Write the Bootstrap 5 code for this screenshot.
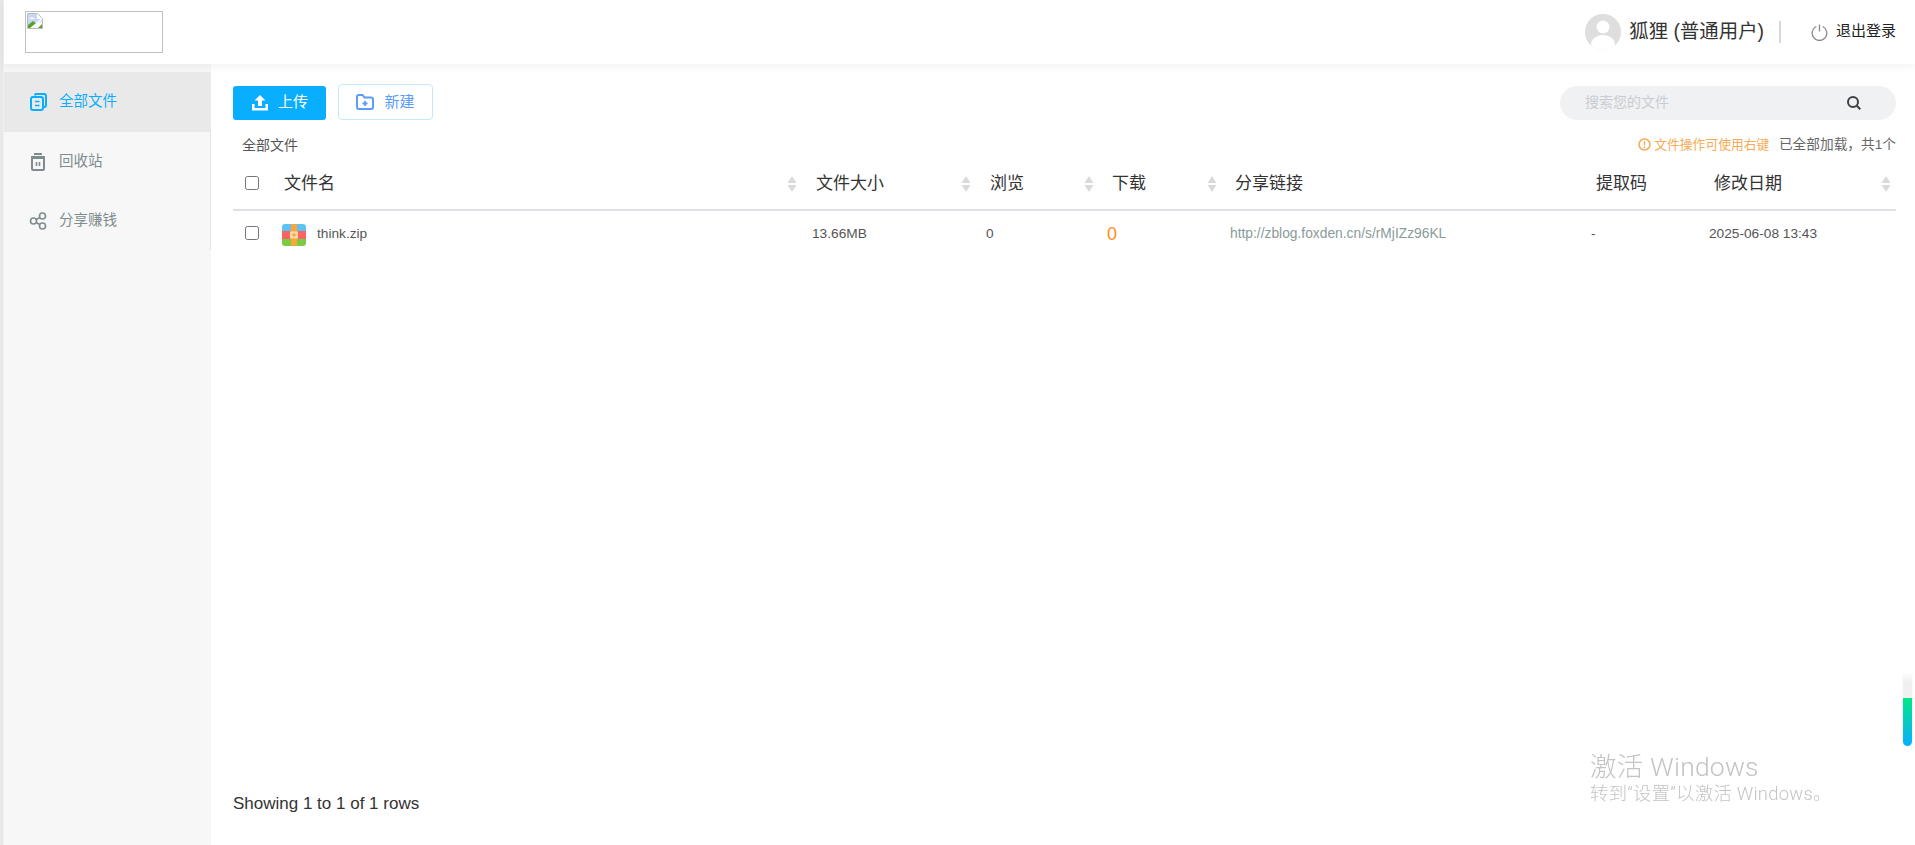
<!DOCTYPE html>
<html lang="zh-CN">
<head>
<meta charset="utf-8">
<title>全部文件</title>
<link rel="stylesheet" href="https://cdn.jsdelivr.net/npm/bootstrap@5.3.0/dist/css/bootstrap.min.css">
<style>
html,body{height:100%;overflow:hidden}
body{font-family:"Liberation Sans","Noto Sans CJK SC",sans-serif;background:#fff;color:#333;font-size:14px}
.edge-strip{width:4px;background:#e8e8e8;flex:none;border-right:1px solid #f1f1f1}
.top-head{height:64px;flex:none;padding:0 19px 0 21px;background:#fff;box-shadow:0 2px 9px rgba(0,0,0,.06);position:relative;z-index:2}
.logo-box{width:138px;height:42px;border:1px solid #c0c0c0;padding:1px;display:block}
.avatar-pic{width:36px;height:36px;display:block}
.user-name{font-size:19.4px;color:#333;margin-left:8px}
.head-sep{width:2px;height:22px;background:#d8d8d8;margin:0 30px 0 15px}
.logout-txt{font-size:15px;color:#222;margin-left:8px;margin-top:-2px}
.side-col{width:207px;flex:none;background:#f7f7f7;padding-top:8px}
.side-list{border-right:1px solid #e4e4e4}
.side-item{height:59px;padding-left:25px;color:#7f8c8d;font-size:14.5px}
.side-glyph{width:18px;height:18px;margin-right:12px;display:block;flex:none}
.side-item.on{height:60px;background:#e9e9e9;color:#0aaeff;margin-right:-1px}
.main-col{padding:21px 19px 0 22px;min-width:0;position:relative}
.btn-up,.btn-up:hover{width:93px;height:34px;background:#0aaeff;color:#fff;border:0;border-radius:3px;font-size:15px;padding:0;gap:9px}
.btn-new,.btn-new:hover{width:95px;height:36px;background:#fff;color:#5a9cf8;border:1px solid #c4e8ff;border-radius:4px;font-size:15px;padding:0;gap:10px;margin-left:12px;margin-top:-1px}
.find-box{width:336px;height:34px;background:#f0f1f3;border-radius:17px;padding:0 35px 0 25px}
.find-box input{border:0;background:transparent;outline:0;flex:1;font-size:14px;min-width:0;padding:0}
.find-box input::placeholder{color:#c8ccd2}
.crumb-row{margin-top:13px;height:24px;padding-left:9px;font-size:14px;color:#555}
.tip-warn{color:#f5ab56;font-size:12.8px;gap:3px;margin-right:9.500px}
.tip-load{color:#666;font-size:13.7px}
.file-table{table-layout:fixed;width:1663px;margin:1px 0 0}
.file-table>thead>tr>th{height:52px;padding:0 0 0 12px;font-size:17px;font-weight:400;color:#333;border-bottom:2px solid #dee2e6;vertical-align:middle;box-shadow:none;background-repeat:no-repeat;background-position:right 5px center;background-size:10px 16px}
.file-table>thead>tr>th:nth-child(n+5){padding-left:13px}
.file-table>thead>tr>th:nth-child(2),.file-table>thead>tr>th:nth-child(3){background-position:right 7px center}
.file-table>thead>tr>th.sortable{background-image:url("data:image/svg+xml,%3Csvg xmlns='http://www.w3.org/2000/svg' viewBox='0 0 10 16'%3E%3Cpath d='M5 0l4.500 7H.5zM5 16L.5 9h9z' fill='%23dadada'/%3E%3C/svg%3E")}
.file-table>thead>tr>th.name-th{padding-left:9px}
.file-table>tbody>tr>td{height:48px;padding:0 0 0 8px;font-size:13.7px;color:#555;border:0;vertical-align:middle;box-shadow:none}
.file-table input[type=checkbox]{width:14px;height:14px;margin:0;display:block;accent-color:#0aaeff}
.file-table>thead input[type=checkbox]{margin-top:-2px}
.file-table>tbody input[type=checkbox]{margin-top:-4px}
.file-table>thead>tr>th.tick-cell,.file-table>tbody>tr>td.tick-cell{padding-left:12px}
.file-name{gap:11px;margin-left:-1px;padding-left:0}
.file-table>tbody>tr>td.count-hot{font-size:18px;color:#ff8c1a}
.file-table>tbody>tr>td.share-link{color:#8b9a9a;font-size:13.8px}
.pager-note{position:absolute;left:22px;bottom:29px;font-size:17px;color:#333}
.win-mark{position:fixed;left:1590px;top:751px;color:#c4c4c4;font-family:Roboto,"Noto Sans CJK SC",sans-serif;z-index:5}
.win-mark .big{font-size:26.5px;line-height:32px;font-weight:300;letter-spacing:.2px}
.win-mark .sub{font-size:18.4px;line-height:22px;font-weight:300;letter-spacing:.25px}
.scroll-pill{position:fixed;left:1903px;top:675px;width:9px;height:71px;border-radius:0 0 5px 5px;background:linear-gradient(#fafafa 0,#efefef 12%,#f1f1f1 33%,#00e887 33%,#0aaeff 100%);box-shadow:0 0 3px rgba(0,0,0,.05);z-index:5}
</style>
</head>
<body class="d-flex">
<div class="edge-strip"></div>
<div class="flex-grow-1 d-flex flex-column" style="min-width:0">
  <header class="top-head d-flex align-items-center justify-content-between">
    <span class="logo-box"><svg width="16" height="16" viewBox="0 0 16 16" class="d-block"><path d="M.5.5h10l5 5v10H.5z" fill="#fff" stroke="#bbb"/><path d="M1 1h9v5h5v3L1 12z" fill="#c6d8f4"/><path d="M1 15v-3l5-4 4 3-4 4z" fill="#5aa02c"/><path d="M11 15l4-4v4z" fill="#5aa02c"/><path d="M2 6c1-2 5-2 6 0z" fill="#fff"/><path d="M3 15l11-9 1 1L6 15z" fill="#fff"/></svg></span>
    <div class="d-flex align-items-center">
      <svg class="avatar-pic" viewBox="0 0 36 36"><defs><clipPath id="av"><circle cx="18" cy="18" r="18"/></clipPath></defs><circle cx="18" cy="18" r="18" fill="#dedede"/><g clip-path="url(#av)"><circle cx="18" cy="13" r="6.500" fill="#fff"/><ellipse cx="18" cy="30" rx="12" ry="9" fill="#fff"/></g></svg>
      <span class="user-name">狐狸 (普通用户)</span>
      <span class="head-sep"></span>
      <svg width="17" height="17" viewBox="0 0 16 16" fill="none" stroke="#888" stroke-width="1.200"><path d="M5 2.400a6.900 6.900 0 1 0 6 0"/><path d="M8 .5v6.500"/></svg>
      <span class="logout-txt">退出登录</span>
    </div>
  </header>
  <div class="flex-grow-1 d-flex" style="min-height:0">
    <nav class="side-col">
      <div class="side-list">
        <div class="side-item on d-flex align-items-center">
          <svg class="side-glyph" viewBox="0 0 18 18" fill="none" stroke="#0aaeff" stroke-width="2"><path d="M6 2.500V2a1 1 0 0 1 1-1h8a2 2 0 0 1 2 2v9a2 2 0 0 1-2 2h-.5"/><rect x="2" y="4" width="12" height="13" rx="2"/><path d="M6 8.500h4.500M6 12.500h4.500" stroke-width="1.700"/></svg>
          <span>全部文件</span>
        </div>
        <div class="side-item d-flex align-items-center">
          <svg class="side-glyph" viewBox="0 0 18 18" fill="none" stroke="#7f8c8d" stroke-width="2"><path d="M5 1h8M2 4h14"/><rect x="3" y="5" width="12" height="12" rx="1"/><path d="M7.500 9v4M10.500 9v4" stroke-width="1.600"/></svg>
          <span>回收站</span>
        </div>
        <div class="side-item d-flex align-items-center">
          <svg class="side-glyph" viewBox="0 0 18 18" fill="none" stroke="#7f8c8d" stroke-width="1.600"><circle cx="4.500" cy="9" r="3"/><circle cx="13.500" cy="4" r="3"/><circle cx="13.500" cy="14" r="3"/><path d="M7.100 7.500l3.800-2M7.100 10.500l3.800 2"/></svg>
          <span>分享赚钱</span>
        </div>
      </div>
    </nav>
    <main class="main-col flex-grow-1">
      <div class="d-flex align-items-center justify-content-between">
        <div class="d-flex align-items-center">
          <button class="btn btn-up d-flex align-items-center justify-content-center" type="button">
            <svg width="18" height="16" viewBox="0 0 18 16" fill="#fff"><path d="M9 0l5.500 5.500H11V11H7V5.500H3.500z"/><path d="M1 9h2.500v4h11V9H17v6.500H1z"/></svg><span>上传</span>
          </button>
          <button class="btn btn-new d-flex align-items-center justify-content-center" type="button">
            <svg width="18" height="16" viewBox="0 0 18 16" fill="none" stroke="#5a9cf8" stroke-width="2"><path d="M1 3a2 2 0 0 1 2-2h3.500l2 2.500H15a2 2 0 0 1 2 2V13a2 2 0 0 1-2 2H3a2 2 0 0 1-2-2z"/><path d="M9 7v5M6.500 9.500h5" stroke-width="1.800"/></svg><span>新建</span>
          </button>
        </div>
        <div class="find-box d-flex align-items-center">
          <input type="text" placeholder="搜索您的文件">
          <svg width="14" height="14" viewBox="0 0 14 14" fill="none" stroke="#3a4048" stroke-width="2"><circle cx="6" cy="6" r="5"/><path d="M9.800 9.800L13.300 13.300"/></svg>
        </div>
      </div>
      <div class="crumb-row d-flex align-items-center justify-content-between">
        <span>全部文件</span>
        <div class="d-flex align-items-center">
          <span class="tip-warn d-flex align-items-center"><svg width="13" height="13" viewBox="0 0 13 13" fill="none" stroke="#f5ab56" stroke-width="1.500"><circle cx="6.500" cy="6.500" r="5.500"/><path d="M6.500 3.200v4M6.500 8.500v1.500"/></svg><span>文件操作可使用右键</span></span>
          <span class="tip-load">已全部加载，共1个</span>
        </div>
      </div>
      <table class="table file-table">
        <colgroup><col style="width:42px"><col style="width:529px"><col style="width:174px"><col style="width:121px"><col style="width:123px"><col style="width:361px"><col style="width:118px"><col style="width:195px"></colgroup>
        <thead>
          <tr>
            <th class="tick-cell"><input type="checkbox"></th>
            <th class="name-th sortable">文件名</th>
            <th class="sortable">文件大小</th>
            <th class="sortable">浏览</th>
            <th class="sortable">下载</th>
            <th>分享链接</th>
            <th>提取码</th>
            <th class="sortable">修改日期</th>
          </tr>
        </thead>
        <tbody>
          <tr>
            <td class="tick-cell"><input type="checkbox"></td>
            <td><div class="file-name d-flex align-items-center">
              <svg width="24" height="22" viewBox="0 0 24 22"><defs><clipPath id="zp"><rect width="24" height="22" rx="3"/></clipPath></defs><g clip-path="url(#zp)"><rect width="24" height="7" fill="#5cc4f5"/><rect y="7" width="24" height="8" fill="#fa6464"/><rect y="15" width="24" height="7" fill="#7ccb45"/><rect x="9" width="6" height="22" fill="#f9a63c"/><rect x="8" y="7.500" width="8" height="7" fill="#ffd9a6"/><rect x="10.500" y="9.500" width="3" height="3" fill="#f9a63c"/></g></svg>
              <span>think.zip</span></div></td>
            <td>13.66MB</td>
            <td>0</td>
            <td class="count-hot">0</td>
            <td class="share-link">http://zblog.foxden.cn/s/rMjIZz96KL</td>
            <td>-</td>
            <td>2025-06-08 13:43</td>
          </tr>
        </tbody>
      </table>
      <div class="pager-note">Showing 1 to 1 of 1 rows</div>
    </main>
  </div>
</div>
<div class="scroll-pill"></div>
<div class="win-mark"><div class="big">激活 Windows</div><div class="sub">转到“设置”以激活 Windows。</div></div>
<script src="https://cdn.jsdelivr.net/npm/bootstrap@5.3.0/dist/js/bootstrap.bundle.min.js"></script>
</body>
</html>
